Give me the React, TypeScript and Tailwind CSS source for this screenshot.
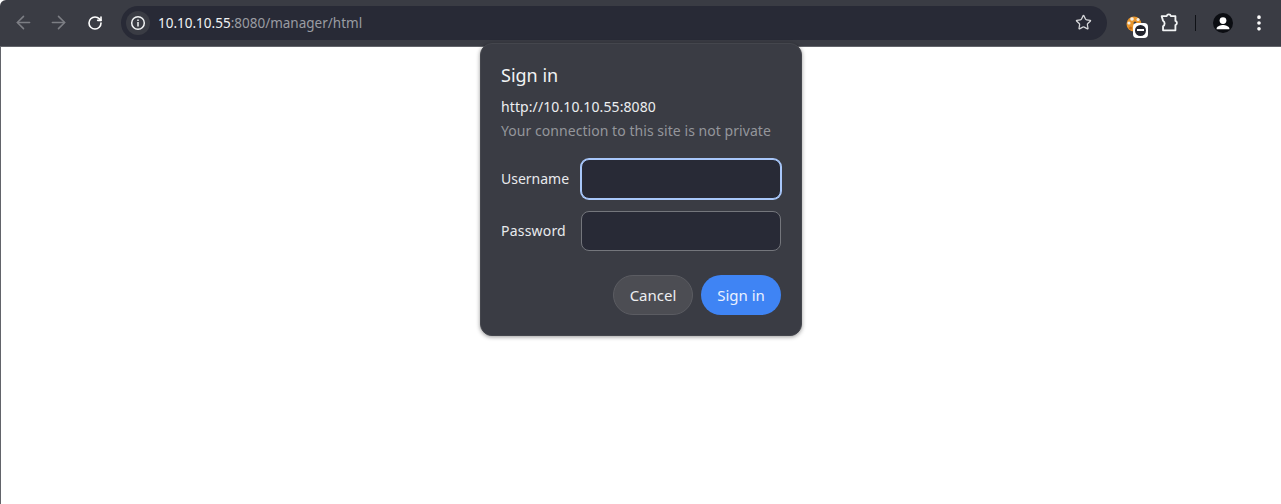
import { ArrowLeft, ArrowRight, RotateCw, Star, MoreVertical } from 'lucide-react';

function ExtensionIcon() {
  return (
    <svg width="22" height="22" viewBox="0 0 24 24" fill="none" stroke="#f1f3f4" strokeWidth="2" strokeLinejoin="round">
      <path d="M4 4.500h5.500a2.300 2.300 0 0 1 4.500 0h5v5.300a2.300 2.300 0 0 1 0 4.400V20H5.500v-4.500a3.500 3.500 0 0 0 0-6z" />
    </svg>
  );
}

function CookieExtension() {
  return (
    <div className="relative w-[30px] h-[30px]">
      <svg width="16" height="16" viewBox="0 0 16 16" className="absolute left-[3px] top-[8px]">
        <circle cx="8" cy="8" r="7.500" fill="#e8962c" />
        <circle cx="6" cy="3" r="1.800" fill="#f3efe6" />
        <circle cx="12" cy="3.500" r="1.500" fill="#f3efe6" />
        <circle cx="3" cy="7" r="1.600" fill="#f3efe6" />
        <circle cx="4.500" cy="12" r="1.500" fill="#c96a10" />
        <circle cx="9" cy="7" r="1.500" fill="#3a3c44" />
      </svg>
      <div className="absolute left-[10px] top-[15px] w-[15px] h-[15px] rounded-[4px] bg-white flex items-center justify-center">
        <div className="w-[11px] h-[11px] rounded-full bg-[#23252e] flex items-center justify-center">
          <div className="w-[7px] h-[2px] bg-white" />
        </div>
      </div>
    </div>
  );
}

function Avatar() {
  return (
    <div className="w-5 h-5 rounded-full bg-[#0b0d12] overflow-hidden">
      <svg width="20" height="20" viewBox="0 0 20 20" fill="#fff">
        <circle cx="10" cy="7.600" r="3.400" />
        <path d="M3.600 15.400c0-2.300 4.200-3.500 6.400-3.500s6.400 1.200 6.400 3.500v.9H3.600z" />
      </svg>
    </div>
  );
}

export default function App() {
  return (
    <div className="relative w-[1281px] h-[504px] overflow-hidden bg-white font-['Noto_Sans',sans-serif]">
      {/* Browser toolbar */}
      <div className="h-[47px] flex items-center bg-[#3a3c44] border-b border-[#62646a] rounded-tl-[6px] pb-[1px]">
        <div className="flex items-center pl-[13px] gap-[14px] w-[121px]">
          <ArrowLeft size={21} strokeWidth={1.8} className="text-[#7c7e84]" />
          <ArrowRight size={21} strokeWidth={1.8} className="text-[#7c7e84]" />
          <RotateCw size={16} strokeWidth={2.4} className="text-white ml-[4px] mt-[1px]" />
        </div>
        <div className="w-[986px] h-[34px] rounded-full bg-[#282a36] flex items-center pl-[5px] pr-[15px]">
          <div className="w-6 h-6 rounded-full bg-[#3a3c44] flex items-center justify-center">
            <svg width="16" height="16" viewBox="0 0 16 16" fill="none">
              <circle cx="8" cy="8" r="6.300" stroke="#f1f3f4" strokeWidth="1.500" />
              <rect x="7.250" y="7" width="1.500" height="4.500" fill="#f1f3f4" />
              <rect x="7.250" y="4.500" width="1.500" height="1.500" fill="#f1f3f4" />
            </svg>
          </div>
          <div className="ml-[8px] mt-[1px] text-[13.5px] text-[#f1f3f4]">
            10.10.10.55<span className="text-[#9a9ca2]">:8080/manager/html</span>
          </div>
          <Star size={17} strokeWidth={1.800} className="ml-auto text-[#d5d6d9]" />
        </div>
        <div className="ml-[16px] flex items-center">
          <CookieExtension />
          <div className="ml-[5px]"><ExtensionIcon /></div>
          <div className="ml-[15px] w-[1px] h-[16px] bg-[#0f1116]" />
          <div className="ml-[17px]"><Avatar /></div>
          <MoreVertical size={20} strokeWidth={2.400} className="ml-[16px] text-white" />
        </div>
      </div>

      {/* Page area */}
      <div className="h-[457px] border-l border-[#62646a] bg-white" />

      {/* HTTP auth dialog */}
      <div className="absolute left-[480px] top-[43px] w-[322px] h-[293px] rounded-[12px] bg-[#3a3c44] border border-[#44464d] shadow-[0_1px_4px_rgba(0,0,0,0.4)] px-[20px] pt-[18px]">
        <div className="text-[18px] leading-[26px] text-[#f1f3f4]">Sign in</div>
        <div className="mt-[9px] text-[14px] tracking-[0.1px] leading-[20px] text-[#eceef0]">http://10.10.10.55:8080</div>
        <div className="mt-[4px] text-[14px] tracking-[0.05px] leading-[20px] text-[#94969b]">Your connection to this site is not private</div>

        <div className="mt-[18px] flex items-center h-[40px]">
          <label className="w-[80px] -mt-[2px] text-[14px] text-[#e8eaed]">Username</label>
          <div className="w-[200px] h-[40px] rounded-[8px] bg-[#282a36] border border-[#a8c7fa] ring-1 ring-[#a8c7fa]" />
        </div>
        <div className="mt-[12px] flex items-center h-[40px]">
          <label className="w-[80px] -mt-[2px] text-[14px] tracking-[0.2px] text-[#e8eaed]">Password</label>
          <div className="w-[200px] h-[40px] rounded-[8px] bg-[#282a36] border border-[#74767c]" />
        </div>

        <div className="mt-[24px] flex justify-end gap-[8px]">
          <button className="w-[80px] h-[40px] rounded-full bg-[#4c4d53] border border-[#5b5c62] text-[15px] text-[#eceef0]">Cancel</button>
          <button className="w-[80px] h-[40px] rounded-full bg-[#3f84f4] text-[15px] text-[#eaf1fe]">Sign in</button>
        </div>
      </div>
    </div>
  );
}
